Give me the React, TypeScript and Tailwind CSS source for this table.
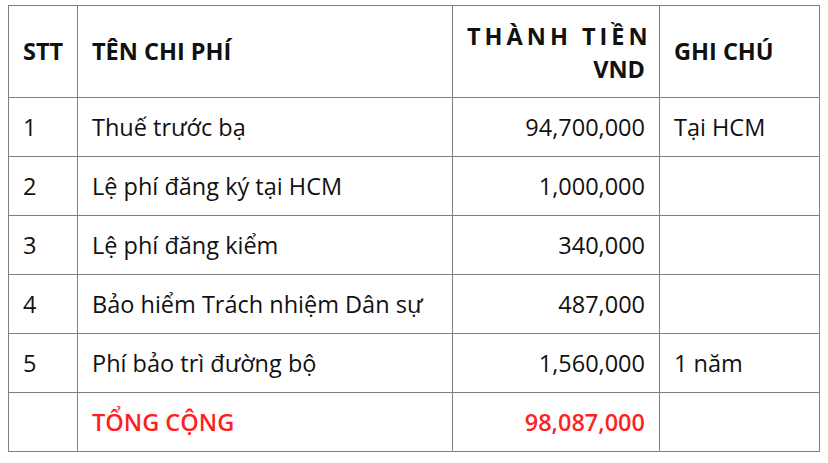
const rows = [
  { stt: "1", name: "Thuế trước bạ", amount: "94,700,000", note: "Tại HCM" },
  { stt: "2", name: "Lệ phí đăng ký tại HCM", amount: "1,000,000", note: "" },
  { stt: "3", name: "Lệ phí đăng kiểm", amount: "340,000", note: "" },
  { stt: "4", name: "Bảo hiểm Trách nhiệm Dân sự", amount: "487,000", note: "" },
  { stt: "5", name: "Phí bảo trì đường bộ", amount: "1,560,000", note: "1 năm" },
];

const cell = "border border-[#808080] px-[14px] align-middle";

export default function App() {
  return (
    <div className="w-[828px] h-[463px] bg-white pl-[8px] pt-[5px] font-['Open_Sans',sans-serif] text-[23.5px] leading-[33px] text-[#111]">
      <table className="border-collapse table-fixed w-[811px]">
        <colgroup>
          <col className="w-[69px]" />
          <col className="w-[375px]" />
          <col className="w-[207px]" />
          <col className="w-[160px]" />
        </colgroup>
        <thead>
          <tr className="h-[92px] font-semibold">
            <th className={cell + " text-left"}>STT</th>
            <th className={cell + " text-left"}>TÊN CHI PHÍ</th>
            <th className={cell + " text-right pt-[2px]"}>
              <div className="whitespace-nowrap">
                <span className="tracking-[0.17em]">THÀNH TIỀ</span>N
              </div>
              <div>VND</div>
            </th>
            <th className={cell + " text-left"}>GHI CHÚ</th>
          </tr>
        </thead>
        <tbody>
          {rows.map((r) => (
            <tr key={r.stt} className="h-[59px]">
              <td className={cell}>{r.stt}</td>
              <td className={cell}>{r.name}</td>
              <td className={cell + " text-right"}>{r.amount}</td>
              <td className={cell}>{r.note}</td>
            </tr>
          ))}
          <tr className="h-[59px] font-semibold text-[#ff1f1f]">
            <td className={cell}></td>
            <td className={cell}>TỔNG CỘNG</td>
            <td className={cell + " text-right"}>98,087,000</td>
            <td className={cell}></td>
          </tr>
        </tbody>
      </table>
    </div>
  );
}
